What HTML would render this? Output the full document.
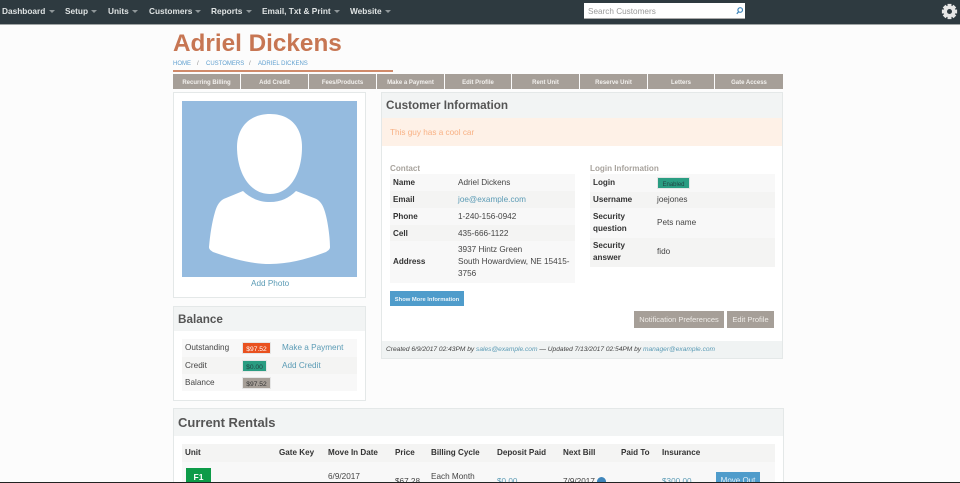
<!DOCTYPE html>
<html><head><meta charset="utf-8"><style>
html,body{margin:0;padding:0;overflow:hidden}
body{width:960px;height:483px;background:#fcfcfc;font-family:"Liberation Sans",sans-serif;color:#444}
#w{position:relative;width:960px;height:483px;overflow:hidden;background:#fcfcfc}
.a{position:absolute;white-space:nowrap}
.b{font-weight:bold}
.nav{top:0;left:0;width:960px;height:24px;background:#2e3a40;border-bottom:1px solid #a0a5a5}
.n{top:6px;font-size:8.3px;line-height:11px;font-weight:bold;color:#dfe3e3}
.car{width:0;height:0;border-left:3px solid transparent;border-right:3px solid transparent;border-top:3px solid #8f979a;top:10px}
.t{top:74px;height:15px;background:#a69f98;color:#f3f1ee;font-size:6px;font-weight:bold;line-height:19px;text-align:center;overflow:hidden}
.panel{background:#fff;border:1px solid #e4e8e8;box-sizing:border-box}
.head{background:#f2f4f4}
.h{font-size:11.7px;font-weight:bold;color:#555;margin-top:1px}
.r{background:#f8f8f8}.r2{background:#f4f4f3}
.f{font-size:8.2px;line-height:12px;color:#444;margin-top:1px}
.k{font-size:8.1px;line-height:12px;font-weight:bold;color:#333;margin-top:1px}
.l{color:#5b9bb5 !important}
.badge{height:12px;line-height:14px;font-size:6.7px;text-align:center;box-sizing:border-box;border:1px solid #e6e6e6;overflow:hidden}
.bc{top:58px;font-size:6px;line-height:12px;color:#5f9fcf}
</style></head><body><div id="w">
<div class="a nav"></div>
<div class="a n" style="left:2px">Dashboard</div><div class="a car" style="left:49px"></div>
<div class="a n" style="left:65px">Setup</div><div class="a car" style="left:91px"></div>
<div class="a n" style="left:108px">Units</div><div class="a car" style="left:132px"></div>
<div class="a n" style="left:149px">Customers</div><div class="a car" style="left:195px"></div>
<div class="a n" style="left:211px">Reports</div><div class="a car" style="left:246px"></div>
<div class="a n" style="left:262px">Email, Txt &amp; Print</div><div class="a car" style="left:334px"></div>
<div class="a n" style="left:350px">Website</div><div class="a car" style="left:385px"></div>
<div class="a" style="left:584px;top:3px;width:161px;height:16px;background:#fff;border-bottom:1px solid #aaa;box-sizing:border-box"></div>
<div class="a" style="left:588px;top:6px;font-size:8.2px;line-height:12px;color:#999">Search Customers</div>
<svg class="a" style="left:735px;top:6px" width="10" height="10" viewBox="0 0 10 10"><circle cx="5.2" cy="4" r="2.3" fill="none" stroke="#3f86bb" stroke-width="1.2"/><path d="M3.6 5.8L1.8 7.8" stroke="#3f86bb" stroke-width="1.3"/></svg>
<svg class="a" style="left:941px;top:2.5px" width="17" height="17" viewBox="0 0 19 19"><g fill="#e6e6e6"><circle cx="9.5" cy="9.5" r="6.6"/><rect x="7.3" y="1" width="4.4" height="17"/><rect x="7.3" y="1" width="4.4" height="17" transform="rotate(45 9.5 9.5)"/><rect x="7.3" y="1" width="4.4" height="17" transform="rotate(90 9.5 9.5)"/><rect x="7.3" y="1" width="4.4" height="17" transform="rotate(135 9.5 9.5)"/></g><circle cx="9.5" cy="9.5" r="2.8" fill="#2e3a40"/></svg>

<div class="a b" style="left:173px;top:30px;font-size:24.3px;line-height:28px;color:#c77653">Adriel Dickens</div>
<div class="a bc" style="left:173px">HOME</div>
<div class="a bc" style="left:197px;color:#888">/</div>
<div class="a bc" style="left:206px">CUSTOMERS</div>
<div class="a bc" style="left:249px;color:#888">/</div>
<div class="a bc" style="left:258px">ADRIEL DICKENS</div>
<div class="a" style="left:173px;top:70px;width:220px;height:1.5px;background:#d08a6a"></div>

<div class="a t" style="left:173px;width:67px">Recurring Billing</div>
<div class="a t" style="left:241px;width:67px">Add Credit</div>
<div class="a t" style="left:309px;width:67px">Fees/Products</div>
<div class="a t" style="left:377px;width:67px">Make a Payment</div>
<div class="a t" style="left:445px;width:66px">Edit Profile</div>
<div class="a t" style="left:512px;width:67px">Rent Unit</div>
<div class="a t" style="left:580px;width:67px">Reserve Unit</div>
<div class="a t" style="left:648px;width:66px">Letters</div>
<div class="a t" style="left:715px;width:68px">Gate Access</div>

<!-- photo -->
<div class="a panel" style="left:173px;top:92px;width:193px;height:206px"></div>
<svg class="a" style="left:182px;top:101px" width="175" height="176" viewBox="182 101 175 176"><rect x="182" y="101" width="175" height="176" fill="#95bbdf"/><path d="M270 114C291 114 302 128 302 147C302 172 291 194 270 194C249 194 237 172 237 147C237 128 249 114 270 114Z" fill="#fff"/><path d="M243 191C250 198 259 202 270 202C281 202 289 198 296 191L314 198C320 200 323 205 325 212C328 222 330 238 330 247C330 249 329 250 326 252C310 258 290 264 270 264C250 264 230 258 213 252C210 250 209 249 209 247C210 235 212 222 215 212C217 205 220 200 226 198Z" fill="#fff"/></svg>
<div class="a f l" style="left:251px;top:277px">Add Photo</div>

<!-- balance -->
<div class="a panel" style="left:173px;top:306px;width:193px;height:95px"></div>
<div class="a head" style="left:174px;top:307px;width:191px;height:24px"></div>
<div class="a h" style="left:178px;top:311px;line-height:16px">Balance</div>
<div class="a r" style="left:182px;top:339px;width:175px;height:18px"></div>
<div class="a r2" style="left:182px;top:357px;width:175px;height:17px"></div>
<div class="a r" style="left:182px;top:374px;width:175px;height:17px"></div>
<div class="a f" style="left:185px;top:341px">Outstanding</div>
<div class="a f" style="left:185px;top:359px">Credit</div>
<div class="a f" style="left:185px;top:376px">Balance</div>
<div class="a badge" style="left:242px;top:342px;width:29px;background:#e9511f;color:#fff">$97.52</div>
<div class="a badge" style="left:242px;top:360px;width:25px;background:#2a9d82;color:#244">$0.00</div>
<div class="a badge" style="left:242px;top:377px;width:29px;background:#a69f98;color:#333">$97.52</div>
<div class="a f l" style="left:282px;top:341px">Make a Payment</div>
<div class="a f l" style="left:282px;top:359px">Add Credit</div>

<!-- customer info -->
<div class="a panel" style="left:381px;top:92px;width:402px;height:267px"></div>
<div class="a head" style="left:382px;top:93px;width:400px;height:25px"></div>
<div class="a h" style="left:386px;top:97px;line-height:16px">Customer Information</div>
<div class="a" style="left:382px;top:118px;width:400px;height:28px;background:#fef1e7"></div>
<div class="a" style="left:390px;top:127px;font-size:8.2px;line-height:12px;color:#f8b184">This guy has a cool car</div>

<div class="a b" style="left:390px;top:163px;font-size:8.1px;line-height:12px;color:#a8a39d">Contact</div>
<div class="a r" style="left:390px;top:174px;width:185px;height:17px"></div>
<div class="a r2" style="left:390px;top:191px;width:185px;height:17px"></div>
<div class="a r" style="left:390px;top:208px;width:185px;height:17px"></div>
<div class="a r2" style="left:390px;top:225px;width:185px;height:16px"></div>
<div class="a r" style="left:390px;top:241px;width:185px;height:42px"></div>
<div class="a k" style="left:393px;top:176px">Name</div><div class="a f" style="left:458px;top:176px">Adriel Dickens</div>
<div class="a k" style="left:393px;top:193px">Email</div><div class="a f l" style="left:458px;top:193px">joe@example.com</div>
<div class="a k" style="left:393px;top:210px">Phone</div><div class="a f" style="left:458px;top:210px">1-240-156-0942</div>
<div class="a k" style="left:393px;top:227px">Cell</div><div class="a f" style="left:458px;top:227px">435-666-1122</div>
<div class="a k" style="left:393px;top:255px">Address</div>
<div class="a f" style="left:458px;top:243px">3937 Hintz Green</div>
<div class="a f" style="left:458px;top:255px">South Howardview, NE 15415-</div>
<div class="a f" style="left:458px;top:267px">3756</div>

<div class="a b" style="left:590px;top:163px;font-size:8.1px;line-height:12px;color:#a8a39d">Login Information</div>
<div class="a r" style="left:590px;top:174px;width:185px;height:18px"></div>
<div class="a r2" style="left:590px;top:192px;width:185px;height:16px"></div>
<div class="a r" style="left:590px;top:208px;width:185px;height:30px"></div>
<div class="a r2" style="left:590px;top:238px;width:185px;height:29px"></div>
<div class="a k" style="left:593px;top:176px">Login</div>
<div class="a badge" style="left:657px;top:177px;width:33px;background:#2a9d82;color:#244;font-size:6px">Enabled</div>
<div class="a k" style="left:593px;top:193px">Username</div><div class="a f" style="left:657px;top:193px">joejones</div>
<div class="a k" style="left:593px;top:210px">Security</div><div class="a k" style="left:593px;top:222px">question</div><div class="a f" style="left:657px;top:216px">Pets name</div>
<div class="a k" style="left:593px;top:239px">Security</div><div class="a k" style="left:593px;top:251px">answer</div><div class="a f" style="left:657px;top:245px">fido</div>

<div class="a" style="left:390px;top:291px;width:74px;height:15px;background:#4f9ccb;color:#eaf3f8;font-size:5.8px;font-weight:bold;line-height:19px;text-align:center;overflow:hidden">Show More Information</div>
<div class="a" style="left:634px;top:311px;width:90px;height:17px;background:#a69f98;color:#eeebe7;font-size:7.5px;line-height:17px;text-align:center">Notification Preferences</div>
<div class="a" style="left:727px;top:311px;width:47px;height:17px;background:#a69f98;color:#eeebe7;font-size:7.5px;line-height:17px;text-align:center">Edit Profile</div>
<div class="a" style="left:382px;top:341px;width:400px;height:17px;background:#f0f3f3"></div>
<div class="a" style="left:386px;top:345px;font-size:6.62px;line-height:10px;font-style:italic;color:#444">Created 6/9/2017 02:43PM by <span class="l">sales@example.com</span> — Updated 7/13/2017 02:54PM by <span class="l">manager@example.com</span></div>

<!-- rentals -->
<div class="a panel" style="left:173px;top:408px;width:611px;height:80px"></div>
<div class="a head" style="left:174px;top:409px;width:609px;height:27px"></div>
<div class="a h" style="left:178px;top:413px;font-size:13px;line-height:17px">Current Rentals</div>
<div class="a" style="left:182px;top:444px;width:593px;height:18px;background:#f4f4f3"></div>
<div class="a r" style="left:182px;top:462px;width:593px;height:21px"></div>
<div class="a k" style="left:185px;top:446px">Unit</div>
<div class="a k" style="left:279px;top:446px">Gate Key</div>
<div class="a k" style="left:328px;top:446px">Move In Date</div>
<div class="a k" style="left:395px;top:446px">Price</div>
<div class="a k" style="left:431px;top:446px">Billing Cycle</div>
<div class="a k" style="left:497px;top:446px">Deposit Paid</div>
<div class="a k" style="left:563px;top:446px">Next Bill</div>
<div class="a k" style="left:621px;top:446px">Paid To</div>
<div class="a k" style="left:662px;top:446px">Insurance</div>
<div class="a" style="left:186px;top:468px;width:25px;height:15px;background:#0d9b48;color:#fff;font-size:8.5px;font-weight:bold;line-height:19px;text-align:center">F1</div>
<div class="a f" style="left:328px;top:470px">6/9/2017</div>
<div class="a f" style="left:395px;top:475px">$67.28</div>
<div class="a f" style="left:431px;top:470px">Each Month</div>
<div class="a f l" style="left:497px;top:475px">$0.00</div>
<div class="a f" style="left:563px;top:475px">7/9/2017</div>
<div class="a" style="left:597px;top:477px;width:9px;height:9px;border-radius:50%;background:#3f86bb"></div>
<div class="a f l" style="left:662px;top:475px">$300.00</div>
<div class="a" style="left:716px;top:472px;width:44px;height:11px;background:#4f9ccb;color:#e4f0f7;font-size:8px;line-height:17px;text-align:center;overflow:hidden">Move Out</div>
<div class="a" style="left:0;top:482px;width:960px;height:1px;background:#222"></div>
</div></body></html>
